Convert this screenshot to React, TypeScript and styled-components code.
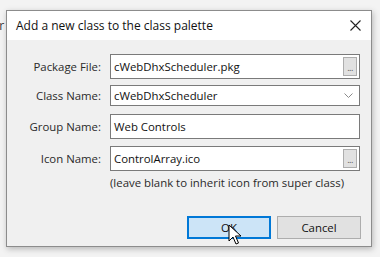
import React, { FC } from "react";
import styled, { createGlobalStyle } from "styled-components";

const GlobalStyle = createGlobalStyle`
  html, body {
    margin: 0;
    padding: 0;
    background: #f2f2f2;
  }
  body {
    font-family: "Open Sans", "Noto Sans", "Liberation Sans", sans-serif;
    font-size: 11.4px;
    color: #1a1a1a;
  }
`;

const Screen = styled.div`
  position: relative;
  width: 380px;
  height: 257px;
  overflow: hidden;
  background: #f3f3f3;
  padding: 10px 0 0 6px;
  box-sizing: border-box;
`;

const BehindText = styled.span`
  position: absolute;
  left: -8px;
  top: 17px;
  font-size: 12px;
  color: #333;
`;

const Dialog = styled.div`
  position: relative;
  width: 366px;
  height: 237px;
  box-sizing: border-box;
  border: 1px solid #8c8c8c;
  background: #f0f0f0;
  box-shadow: 1px 2px 6px rgba(0, 0, 0, 0.25);
  display: flex;
  flex-direction: column;
`;

const TitleBar = styled.div`
  height: 29px;
  background: #ffffff;
  display: flex;
  align-items: center;
  justify-content: space-between;
  padding: 0 10px 0 9px;
`;

const Title = styled.span`
  font-size: 12px;
  color: #111;
`;

const Body = styled.div`
  flex: 1;
  padding: 14px 11px 0 0;
  display: flex;
  flex-direction: column;
`;

const Row = styled.div<{ $top: number; $h: number }>`
  display: grid;
  grid-template-columns: 94px 250px;
  column-gap: 9px;
  align-items: center;
  margin-top: ${(p) => p.$top}px;
  height: ${(p) => p.$h}px;
`;

const Label = styled.label`
  text-align: right;
  color: #2a2a2a;
`;

const Field = styled.div<{ $h: number }>`
  height: ${(p) => p.$h}px;
  box-sizing: border-box;
  border: 1px solid #7a7a7a;
  background: #fff;
  display: flex;
  align-items: center;
  padding: 0 2px 0 3px;
  color: #111;
`;

const FieldText = styled.span`
  flex: 1;
`;

const DotsButton = styled.div`
  width: 14px;
  height: 19px;
  box-sizing: border-box;
  border: 1px solid #adadad;
  background: #e1e1e1;
  color: #555;
  font-size: 9px;
  line-height: 19px;
  text-align: center;
  letter-spacing: -0.5px;
`;

const Hint = styled.div`
  margin: 3px 0 0 103px;
  color: #2a2a2a;
  height: 17px;
  line-height: 17px;
`;

const ButtonRow = styled.div`
  display: flex;
  justify-content: flex-end;
  gap: 6px;
  margin-top: 25px;
  margin-right: -1px;
`;

const Button = styled.div<{ $primary?: boolean }>`
  position: relative;
  width: 84px;
  height: 23px;
  box-sizing: border-box;
  border: ${(p) => (p.$primary ? "2px solid #0078d7" : "1px solid #adadad")};
  background: ${(p) => (p.$primary ? "#cce4f7" : "#e1e1e1")};
  display: flex;
  align-items: center;
  justify-content: center;
  color: #111;
`;

const Cursor = styled.svg`
  position: absolute;
  left: 39px;
  top: 6px;
`;

const Chevron = () => (
  <svg width="9" height="5" viewBox="0 0 9 5" style={{ marginRight: 4 }}>
    <path d="M0.5 0.5 L4.5 4.5 L8.5 0.5" fill="none" stroke="#8a8a8a" strokeWidth="1" />
  </svg>
);

const CloseIcon = () => (
  <svg width="11" height="11" viewBox="0 0 11 11">
    <path d="M0.5 0.5 L10.5 10.5 M10.5 0.5 L0.5 10.5" stroke="#222" strokeWidth="1.1" />
  </svg>
);

const App: FC = () => {
  return (
    <>
      <GlobalStyle />
      <Screen>
        <BehindText>or</BehindText>
        <Dialog>
          <TitleBar>
            <Title>Add a new class to the class palette</Title>
            <CloseIcon />
          </TitleBar>
          <Body>
            <Row $top={0} $h={25}>
              <Label>Package File:</Label>
              <Field $h={25}>
                <FieldText>cWebDhxScheduler.pkg</FieldText>
                <DotsButton>...</DotsButton>
              </Field>
            </Row>
            <Row $top={6} $h={21}>
              <Label>Class Name:</Label>
              <Field $h={21}>
                <FieldText>cWebDhxScheduler</FieldText>
                <Chevron />
              </Field>
            </Row>
            <Row $top={8} $h={25}>
              <Label>Group Name:</Label>
              <Field $h={25}>
                <FieldText>Web Controls</FieldText>
              </Field>
            </Row>
            <Row $top={7} $h={25}>
              <Label>Icon Name:</Label>
              <Field $h={25}>
                <FieldText>ControlArray.ico</FieldText>
                <DotsButton>...</DotsButton>
              </Field>
            </Row>
            <Hint>(leave blank to inherit icon from super class)</Hint>
            <ButtonRow>
              <Button $primary>
                OK
                <Cursor width="15" height="22" viewBox="0 0 15 22">
                  <path
                    d="M1 1 L1 17 L5 13 L8 20 L10.5 19 L7.5 12 L13 12 Z"
                    fill="#fff"
                    stroke="#000"
                    strokeWidth="1"
                    strokeLinejoin="round"
                  />
                </Cursor>
              </Button>
              <Button>Cancel</Button>
            </ButtonRow>
          </Body>
        </Dialog>
      </Screen>
    </>
  );
};

export default App;
